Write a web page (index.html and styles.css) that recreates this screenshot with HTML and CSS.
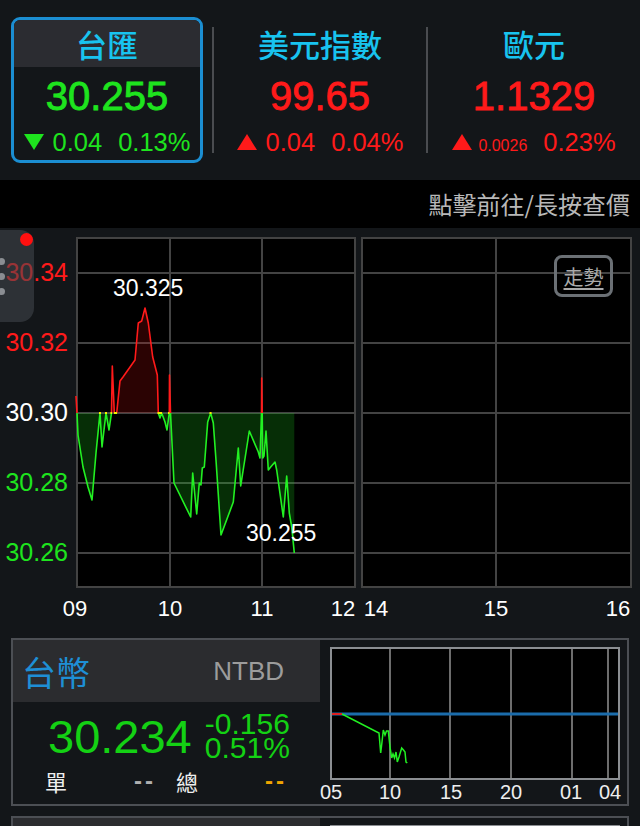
FILE: index.html
```html
<!DOCTYPE html>
<html lang="zh-Hant">
<head>
    <meta charset="UTF-8">
    <meta name="viewport" content="width=device-width, initial-scale=1.0">
    <title>外匯 - 台匯</title>
    <link rel="stylesheet" href="styles.css">
</head>
<body>
    <header class="quotes">
        <div class="quote active">
            <div class="quote-name">台匯</div>
            <div class="quote-price down">30.255</div>
            <div class="quote-change down">
                <svg class="arrow" viewBox="0 0 20 17"><polygon points="0,0 20,0 10,16"/></svg>
                <span>0.04</span>
                <span class="pct">0.13%</span>
            </div>
        </div>
        <div class="divider"></div>
        <div class="quote">
            <div class="quote-name">美元指數</div>
            <div class="quote-price up">99.65</div>
            <div class="quote-change up">
                <svg class="arrow" viewBox="0 0 20 17"><polygon points="10,0 20,16 0,16"/></svg>
                <span>0.04</span>
                <span class="pct">0.04%</span>
            </div>
        </div>
        <div class="divider"></div>
        <div class="quote">
            <div class="quote-name">歐元</div>
            <div class="quote-price up">1.1329</div>
            <div class="quote-change up">
                <svg class="arrow" viewBox="0 0 20 17"><polygon points="10,0 20,16 0,16"/></svg>
                <span class="small">0.0026</span>
                <span class="pct">0.23%</span>
            </div>
        </div>
    </header>

    <div class="hint">點擊前往/長按查價</div>

    <section class="chart">
        <svg class="chart-svg" width="640" height="397" viewBox="0 228 640 397">
            <defs>
                <clipPath id="above"><rect x="0" y="228" width="640" height="185"/></clipPath>
                <clipPath id="below"><rect x="0" y="413" width="640" height="200"/></clipPath>
            </defs>

            <!-- plot areas -->
            <rect x="77" y="238" width="278" height="349" fill="#000"/>
            <rect x="362" y="238" width="269" height="349" fill="#000"/>

            <!-- grid -->
            <g class="grid">
                <path d="M76 238H356M76 273H356M76 343H356M76 413H356M76 483H356M76 553H356M76 587H356"/>
                <path d="M77 237V588M170 238V587M262 238V587M355 237V588"/>
                <path d="M361 238H632M361 273H632M361 343H632M361 413H632M361 483H632M361 553H632M361 587H632"/>
                <path d="M362 237V588M496 238V587M631 237V588"/>
            </g>

            <!-- price line, split on the previous close -->
            <g id="trace">
                <polygon class="fill-up" clip-path="url(#above)" points="76,396 77,413 78,435 83,467 88,487 92,500 96,453 100,413 102,447 106,413 109,430 111.5,413 112.3,366 114.3,413 116.7,413 120,381 123,377 135,360 138.3,323 141.7,321 145,308 148.3,323 152.7,357 157.3,375 158.3,413 160,418 161.7,413 165,422 167,430 169.3,413 169.5,375 170.5,413 174,483 190.7,517 192.7,473 196.7,514 199.3,483 201,485 202.3,468 204.3,467 207.7,422 210.7,413 213.3,423 216,460 221,535 233.3,502 238.3,448 240.7,486 249.3,431 258.3,452 260,458 261.5,413 261.7,378 262.2,413 262.7,458 264,456 266,431 268.3,470 270.7,467 275,462 276.7,470 283.3,517 286.7,476 289.3,513 291.7,527 294.3,553 294.3,413 76,413"/>
                <polygon class="fill-down" clip-path="url(#below)" points="76,396 77,413 78,435 83,467 88,487 92,500 96,453 100,413 102,447 106,413 109,430 111.5,413 112.3,366 114.3,413 116.7,413 120,381 123,377 135,360 138.3,323 141.7,321 145,308 148.3,323 152.7,357 157.3,375 158.3,413 160,418 161.7,413 165,422 167,430 169.3,413 169.5,375 170.5,413 174,483 190.7,517 192.7,473 196.7,514 199.3,483 201,485 202.3,468 204.3,467 207.7,422 210.7,413 213.3,423 216,460 221,535 233.3,502 238.3,448 240.7,486 249.3,431 258.3,452 260,458 261.5,413 261.7,378 262.2,413 262.7,458 264,456 266,431 268.3,470 270.7,467 275,462 276.7,470 283.3,517 286.7,476 289.3,513 291.7,527 294.3,553 294.3,413 76,413"/>
                <polyline class="line-up" clip-path="url(#above)" points="76,396 77,413 78,435 83,467 88,487 92,500 96,453 100,413 102,447 106,413 109,430 111.5,413 112.3,366 114.3,413 116.7,413 120,381 123,377 135,360 138.3,323 141.7,321 145,308 148.3,323 152.7,357 157.3,375 158.3,413 160,418 161.7,413 165,422 167,430 169.3,413 169.5,375 170.5,413 174,483 190.7,517 192.7,473 196.7,514 199.3,483 201,485 202.3,468 204.3,467 207.7,422 210.7,413 213.3,423 216,460 221,535 233.3,502 238.3,448 240.7,486 249.3,431 258.3,452 260,458 261.5,413 261.7,378 262.2,413 262.7,458 264,456 266,431 268.3,470 270.7,467 275,462 276.7,470 283.3,517 286.7,476 289.3,513 291.7,527 294.3,553"/>
                <polyline class="line-down" clip-path="url(#below)" points="76,396 77,413 78,435 83,467 88,487 92,500 96,453 100,413 102,447 106,413 109,430 111.5,413 112.3,366 114.3,413 116.7,413 120,381 123,377 135,360 138.3,323 141.7,321 145,308 148.3,323 152.7,357 157.3,375 158.3,413 160,418 161.7,413 165,422 167,430 169.3,413 169.5,375 170.5,413 174,483 190.7,517 192.7,473 196.7,514 199.3,483 201,485 202.3,468 204.3,467 207.7,422 210.7,413 213.3,423 216,460 221,535 233.3,502 238.3,448 240.7,486 249.3,431 258.3,452 260,458 261.5,413 261.7,378 262.2,413 262.7,458 264,456 266,431 268.3,470 270.7,467 275,462 276.7,470 283.3,517 286.7,476 289.3,513 291.7,527 294.3,553"/>
                <path class="line-flat" d="M99 413H101M105 413H107M110.5 413H112M114 413H117M157.5 413H162M168 413H169.5M209.5 413H211.5"/>
            </g>

            <!-- axis labels -->
            <text class="axis-y up" x="68" y="281">30.34</text>
            <text class="axis-y up" x="68" y="351">30.32</text>
            <text class="axis-y flat" x="68" y="421">30.30</text>
            <text class="axis-y down" x="68" y="491">30.28</text>
            <text class="axis-y down" x="68" y="561">30.26</text>

            <text class="axis-x" x="75" y="616">09</text>
            <text class="axis-x" x="170" y="616">10</text>
            <text class="axis-x" x="262" y="616">11</text>
            <text class="axis-x" x="343" y="616">12</text>
            <text class="axis-x" x="376" y="616">14</text>
            <text class="axis-x" x="496" y="616">15</text>
            <text class="axis-x" x="618" y="616">16</text>

            <text class="note" x="113" y="296">30.325</text>
            <text class="note" x="246" y="541">30.255</text>
        </svg>

        <div class="float-menu">
            <span class="dot"></span>
            <span class="dot"></span>
            <span class="dot"></span>
        </div>
        <span class="badge"></span>
        <button class="trend-btn">走勢</button>
    </section>

    <section class="list">
        <div class="card">
            <div class="card-info">
                <div class="card-head">
                    <span class="card-name">台幣</span>
                    <span class="card-code">NTBD</span>
                </div>
                <div class="card-price">
                    <span class="price">30.234</span>
                    <div class="delta">
                        <div>-0.156</div>
                        <div>0.51%</div>
                    </div>
                </div>
                <div class="card-stats">
                    <div class="stat"><span class="stat-label">單</span><span class="stat-value">--</span></div>
                    <div class="stat"><span class="stat-label">總</span><span class="stat-value total">--</span></div>
                </div>
            </div>
            <svg class="mini" width="307" height="164" viewBox="320 640 307 164">
                <rect x="331" y="648" width="288" height="131" fill="#000" stroke="#8b8e92" stroke-width="2"/>
                <path class="mini-grid" d="M390 649V778M450 649V778M511 649V778M572 649V778M608 649V778M332 714H618"/>
                <path class="mini-base" d="M332 714H618"/>
                <path class="mini-up" d="M332 714H342"/>
                <polyline class="mini-down" points="342,714 379,733 380.7,753 382,742 383.3,730 385,735 386.5,731 388.3,731 390,747 391.7,758 393,754 394.5,758 396,752 397.3,762 399,757 401.7,748 403.5,750 405,752 406,762 407.3,763"/>
                <text class="mini-x" x="331" y="799">05</text>
                <text class="mini-x" x="390" y="799">10</text>
                <text class="mini-x" x="451" y="799">15</text>
                <text class="mini-x" x="511" y="799">20</text>
                <text class="mini-x" x="571" y="799">01</text>
                <text class="mini-x" x="610" y="799">04</text>
            </svg>
        </div>

        <!-- next row, only its top edge is on screen -->
        <div class="card">
            <div class="card-info">
                <div class="card-head"></div>
            </div>
            <svg class="mini" width="307" height="164" viewBox="320 640 307 164">
                <rect x="331" y="648" width="288" height="131" fill="#000" stroke="#8b8e92" stroke-width="2"/>
            </svg>
        </div>
    </section>
</body>
</html>
```

FILE: styles.css
```css
body {
    margin: 0;
    height: 826px;
    overflow: hidden;
    background-color: #131619;
    font-family: 'Liberation Sans', 'Noto Sans CJK TC', sans-serif;
    color: #fff;
}

/* ---- top quote tabs ---- */
.quotes {
    display: grid;
    grid-template-columns: 1fr 2px 1fr 2px 1fr;
    align-items: start;
    height: 180px;
    padding-top: 17px;
    box-sizing: border-box;
}
.divider {
    margin-top: 10px;
    height: 126px;
    background-color: #4a4c50;
}
.quote {
    width: 192px;
    margin: 0 auto;
    border: 3px solid transparent;
    border-radius: 9px;
    box-sizing: border-box;
    text-align: center;
}
.quote.active {
    margin-left: 11px;
    border-color: #1b8ed2;
}
.quote-name {
    height: 47px;
    line-height: 47px;
    font-size: 31px;
    font-weight: 500;
    color: #18c3ef;
    font-family: 'Noto Sans CJK TC', sans-serif;
}
.quote.active .quote-name {
    background-color: #2b2c31;
    border-radius: 6px 6px 0 0;
}
.quote-price {
    height: 58px;
    line-height: 58px;
    font-size: 40px;
    -webkit-text-stroke: 0.8px currentColor;
}
.quote-change {
    height: 35px;
    display: flex;
    justify-content: center;
    align-items: baseline;
    gap: 9px;
    font-size: 25.5px;
    line-height: 35px;
    white-space: nowrap;
}
.quote-change .pct {
    margin-left: 7px;
}
.quote-change .small {
    font-size: 16px;
    margin-left: -3px;
}
.arrow {
    width: 20px;
    height: 17px;
    fill: currentColor;
}
.up { color: #ff1a1a; }
.down { color: #1ee41e; }

/* ---- hint bar ---- */
.hint {
    height: 48px;
    line-height: 48px;
    background-color: #000;
    text-align: right;
    padding-right: 10px;
    font-size: 24px;
    color: #b8b8b8;
    font-family: 'Noto Sans CJK TC', sans-serif;
}

/* ---- intraday chart ---- */
.chart {
    position: relative;
    height: 397px;
}
.chart-svg {
    display: block;
}
.grid path {
    fill: none;
    stroke: #434343;
    stroke-width: 2;
}
.fill-up { fill: rgba(255, 20, 20, 0.17); }
.fill-down { fill: rgba(30, 230, 30, 0.2); }
.line-up, .line-down, .line-flat {
    fill: none;
    stroke-width: 1.6;
    stroke-linejoin: round;
}
.line-up { stroke: #ff1a1a; }
.line-down { stroke: #22f022; }
.line-flat { stroke: #f2f200; stroke-width: 2; }

.axis-y {
    font-size: 25px;
    text-anchor: end;
}
.axis-y.up { fill: #ff1a1a; }
.axis-y.flat { fill: #fff; }
.axis-y.down { fill: #1ee41e; }
.axis-x {
    font-size: 22px;
    fill: #fff;
    text-anchor: middle;
}
.note {
    font-size: 23px;
    fill: #fff;
}

.float-menu {
    position: absolute;
    left: 0;
    top: 2px;
    width: 34px;
    height: 92px;
    border-radius: 0 14px 14px 0;
    background-color: rgba(68, 72, 78, 0.55);
    display: flex;
    flex-direction: column;
    justify-content: center;
    gap: 8px;
}
.float-menu .dot {
    width: 7px;
    height: 7px;
    margin-left: -2px;
    border-radius: 50%;
    background-color: #8a8d92;
}
.badge {
    position: absolute;
    left: 20px;
    top: 5px;
    width: 13px;
    height: 13px;
    border-radius: 50%;
    background-color: #ff1010;
}
.trend-btn {
    position: absolute;
    left: 554px;
    top: 27px;
    width: 59px;
    height: 42px;
    padding: 0;
    border: 3px solid #6b7075;
    border-radius: 8px;
    background: transparent;
    color: #a9a9a9;
    font-family: 'Noto Sans CJK TC', sans-serif;
    font-size: 20px;
    text-decoration: underline;
    text-underline-offset: 3px;
}

/* ---- watch list cards ---- */
.list {
    padding: 13px 11px 0;
    display: flex;
    flex-direction: column;
    gap: 10px;
}
.card {
    display: flex;
    flex-shrink: 0;
    height: 168px;
    border: 2px solid #4c4f54;
    box-sizing: border-box;
}
.card-info {
    width: 307px;
}
.card-head {
    height: 62px;
    display: flex;
    align-items: center;
    justify-content: space-between;
    padding: 0 36px 0 9px;
    background-color: #2b2c2f;
}
.card-name {
    font-size: 34px;
    color: #1e8fd5;
    font-family: 'Noto Sans CJK TC', sans-serif;
}
.card-code {
    font-size: 26px;
    color: #9c9c9c;
}
.card-price {
    margin-top: 9px;
    height: 50px;
    display: flex;
    align-items: center;
    padding-left: 35px;
    color: #14d114;
}
.price {
    font-size: 47px;
}
.delta {
    margin-left: 13px;
    text-align: right;
    font-size: 30px;
    line-height: 24px;
}
.card-stats {
    height: 40px;
    display: flex;
    align-items: center;
    gap: 23px;
    padding-left: 32px;
}
.stat {
    width: 108px;
    display: flex;
    justify-content: space-between;
    align-items: center;
}
.stat-label {
    font-size: 22px;
    color: #eee;
    font-family: 'Noto Sans CJK TC', sans-serif;
}
.stat-value {
    font-size: 24px;
    letter-spacing: 3px;
    margin-right: -3px;
    font-weight: bold;
    color: #b0b0b0;
}
.stat-value.total {
    color: #f0a500;
}
.mini {
    display: block;
}
.mini-grid {
    fill: none;
    stroke: #6d6d6d;
    stroke-width: 2;
}
.mini-base {
    stroke: #1b6cab;
    stroke-width: 3;
}
.mini-up {
    stroke: #e02020;
    stroke-width: 2;
}
.mini-down {
    fill: none;
    stroke: #22f022;
    stroke-width: 1.5;
}
.mini-x {
    font-size: 20px;
    fill: #eee;
    text-anchor: middle;
}
```
